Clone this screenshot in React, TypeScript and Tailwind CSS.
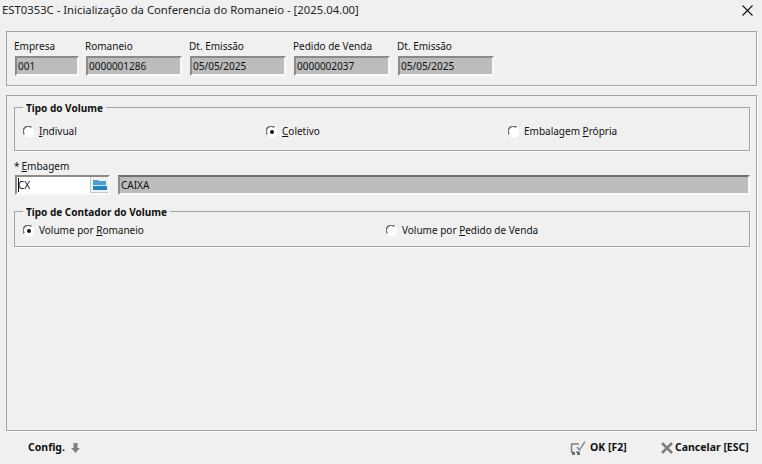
const sans = "font-['Noto_Sans',sans-serif]";

function Field({ label, value, w, className = "" }: { label: string; value: string; w: string; className?: string }) {
  return (
    <div className={`flex flex-col ${className}`}>
      <div className="-ml-[1px] h-[15px] text-[10px] leading-[15px] text-[#111]">{label}</div>
      <div className={`mt-[2px] h-[20px] ${w} border-2 border-[#f9f9f9] border-l-[#8a8a8a] border-t-[#8a8a8a] bg-[#bcbcbc] pl-[1px] text-[10px] leading-[16px] text-[#111]`}>
        {value}
      </div>
    </div>
  );
}

function Radio({ checked = false }: { checked?: boolean }) {
  return (
    <svg width="12" height="12" viewBox="0 0 12 12" className="shrink-0">
      <circle cx="6" cy="6" r="5.5" fill="#fff" />
      <path d="M1.2 8.2A5 5 0 0 1 8.4 1.4" fill="none" stroke="#6f6f6f" strokeWidth="1.5" />
      {checked && <circle cx="6" cy="6" r="2" fill="#111" />}
    </svg>
  );
}

function RadioItem({ label, checked, className = "" }: { label: [string, string, string]; checked?: boolean; className?: string }) {
  return (
    <div className={`flex items-center gap-[4px] text-[10px] leading-[15px] text-[#111] ${className}`}>
      <Radio checked={checked} />
      <span>
        {label[0]}
        <span className="underline underline-offset-1">{label[1]}</span>
        {label[2]}
      </span>
    </div>
  );
}

function Group({ title, className, children }: { title: string; className: string; children: React.ReactNode }) {
  return (
    <div className={`relative border border-[#a3a3a3] shadow-[1px_1px_0_#fbfbfb] ${className}`}>
      <div className="absolute left-[8px] top-[-7px] bg-[#f0f0f0] px-[3px] text-[10px] font-bold leading-[15px] text-[#111]">{title}</div>
      {children}
    </div>
  );
}

export default function App() {
  return (
    <div className={`flex h-[464px] w-[762px] flex-col overflow-hidden bg-[#f0f0f0] ${sans}`}>
      <div className="flex h-[21px] shrink-0 items-center justify-between pl-[2px] pr-[9px] text-[11.3px] text-[#1f1f1f]">
        <span>EST0353C - Inicialização da Conferencia do Romaneio - [2025.04.00]</span>
        <svg width="11" height="11" viewBox="0 0 11 11"><path d="M.5.5l10 10M10.5.5l-10 10" stroke="#111" strokeWidth="1.1" fill="none" /></svg>
      </div>

      <div className="ml-[6px] mr-[5px] mt-[10px] flex h-[55px] shrink-0 border border-[#a3a3a3] pl-[8px] pt-[7px] shadow-[1px_1px_0_#fbfbfb]">
        <Field label="Empresa" value="001" w="w-[64px]" />
        <Field label="Romaneio" value="0000001286" w="w-[96px]" className="ml-[7px]" />
        <Field label="Dt. Emissão" value="05/05/2025" w="w-[96px]" className="ml-[8px]" />
        <Field label="Pedido de Venda" value="0000002037" w="w-[96px]" className="ml-[8px]" />
        <Field label="Dt. Emissão" value="05/05/2025" w="w-[96px]" className="ml-[8px]" />
      </div>

      <div className="ml-[6px] mr-[5px] mt-[9px] flex h-[336px] shrink-0 flex-col border border-[#a3a3a3] pl-[7px] pr-[6px] pt-[11px] shadow-[1px_1px_0_#fbfbfb]">
        <Group title="Tipo do Volume" className="h-[44px] shrink-0">
          <div className="flex pl-[8px] pt-[16px]">
            <RadioItem label={["", "I", "ndivual"]} className="w-[243px]" />
            <RadioItem label={["", "C", "oletivo"]} className="w-[242px]" checked />
            <RadioItem label={["Embalagem ", "P", "rópria"]} />
          </div>
        </Group>

        <div className="mt-[8px] h-[15px] text-[10px] leading-[15px] text-[#111]">
          <span className="mr-[2px]">*</span><span className="underline underline-offset-1">E</span>mbagem
        </div>
        <div className="ml-[1px] mt-[1px] flex h-[20px] shrink-0">
          <div className="flex w-[95px] border-2 border-b-[#f9f9f9] border-l-[#8a8a8a] border-r-[#f9f9f9] border-t-[#8a8a8a] bg-white">
            <div className="relative flex-1 pl-[1px] text-[10px] leading-[16px] text-[#111]">
              CX
              <span className="absolute left-[1px] top-[1px] h-[14px] w-[1px] bg-[#111]" />
            </div>
            <div className="flex w-[18px] items-center justify-center border-b border-l border-[#c8c8c8] bg-[#f0f0f0]">
              <svg width="15" height="12" viewBox="0 0 15 12">
                <path d="M1 1h5l1 1h7v4H1z" fill="#4a9fd8" />
                <path d="M1 6h14v1H1z" fill="#d8ecf8" />
                <path d="M1 7h14v4H1z" fill="#1e86c8" />
              </svg>
            </div>
          </div>
          <div className="ml-[8px] flex-1 border-2 border-b-[#f9f9f9] border-l-[#8a8a8a] border-r-[#f9f9f9] border-t-[#6f6f6f] bg-[#bcbcbc] pl-[1px] text-[10px] leading-[16px] text-[#111]">CAIXA</div>
        </div>

        <Group title="Tipo de Contador do Volume" className="mt-[16px] h-[36px] shrink-0">
          <div className="flex pl-[8px] pt-[11px]">
            <RadioItem label={["Volume por ", "R", "omaneio"]} className="w-[363px]" checked />
            <RadioItem label={["Volume por ", "P", "edido de Venda"]} />
          </div>
        </Group>
      </div>

      <div className="flex flex-1 items-center pt-[1px] text-[10.5px] font-bold text-[#111]">
        <span className="ml-[28px] w-[36px]">Config.</span>
        <svg width="9" height="10" viewBox="0 0 9 10" className="ml-[7px]"><path d="M2.5 0h4v5H9L4.5 10 0 5h2.5z" fill="#808080" /></svg>
        <svg width="16" height="15" viewBox="0 0 16 15" className="ml-[490px]">
          <path d="M1.5 3v8h2M1 3h8M6 11h3" fill="none" stroke="#808080" strokeWidth="1.6" />
          <path d="M7 6l2.5 3L15 .5" fill="none" stroke="#909090" strokeWidth="1.6" />
          <rect x="2" y="11" width="3" height="3" fill="#707070" />
          <rect x="7" y="11" width="3" height="3" fill="#707070" />
        </svg>
        <span className="ml-[4px] w-[42px]">OK [F2]</span>
        <svg width="12" height="12" viewBox="0 0 12 12" className="ml-[29px]"><path d="M1 1l10 10M11 1L1 11" stroke="#808080" strokeWidth="2.6" fill="none" /></svg>
        <span className="ml-[2px]">Cancelar [ESC]</span>
      </div>
    </div>
  );
}
